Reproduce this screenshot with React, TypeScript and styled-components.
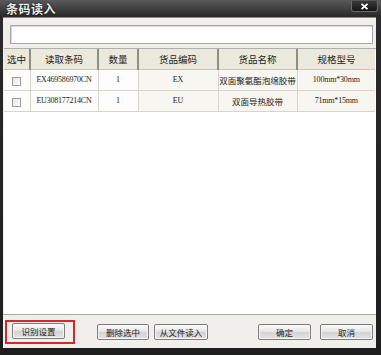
import React from 'react'
import styled, { createGlobalStyle } from 'styled-components'

const GlobalStyle = createGlobalStyle`
  html, body {
    margin: 0;
    padding: 0;
    background: #1a1a1a;
  }
  * {
    box-sizing: border-box;
  }
`

const Window = styled.div`
  width: 381px;
  height: 355px;
  display: flex;
  flex-direction: column;
  background: linear-gradient(#5a5a5a 0px, #2a2a2a 16px, #1e1e1e 100%);
  padding: 0 5px 7px 3px;
  font-family: 'Noto Sans CJK SC', 'Liberation Sans', sans-serif;
`

const TitleBar = styled.div`
  height: 17px;
  display: flex;
  align-items: center;
  justify-content: space-between;
  padding-left: 3px;
`

const Title = styled.span`
  color: #ececec;
  font-size: 12px;
  font-weight: 700;
  letter-spacing: 0.5px;
  line-height: 17px;
  text-shadow: 0 0 2px #000;
`

const CloseButton = styled.div`
  width: 27px;
  height: 11px;
  margin-top: -4px;
  margin-right: -2px;
  border: 1px solid #6a6a6a;
  border-top: none;
  border-radius: 0 0 3px 3px;
  background: linear-gradient(#3a3a3a, #151515);
  display: flex;
  align-items: center;
  justify-content: center;
`

const Body = styled.div`
  flex: 1;
  display: flex;
  flex-direction: column;
  background: #f0efeb;
  border-top: 1px solid #8a8a8a;
`

const SearchRow = styled.div`
  padding: 7px 3px 3px 7px;
`

const SearchInput = styled.div`
  height: 19px;
  background: #fff;
  border: 1px solid #a8a8a8;
  box-shadow: inset 1px 1px 0 #d8d8d8;
`

const TableArea = styled.div`
  flex: 1;
  background: #fff;
  border-top: 1px solid #b0b0b0;
  margin: 1px 0 0 1px;
`

const Grid = styled.table`
  border-collapse: collapse;
  table-layout: fixed;
  width: 371px;
`

const HeadCell = styled.th<{ w: number }>`
  width: ${({ w }) => w}px;
  height: 20px;
  padding: 0;
  background: #ebe9dc;
  border-right: 2px solid #8f8d84;
  border-bottom: 1px solid #c9c6b8;
  color: #222;
  font-size: 9.5px;
  font-weight: 400;
  text-align: center;
  &:last-child {
    border-right: none;
  }
`

const Cell = styled.td<{ tint?: boolean; serif?: boolean }>`
  height: 21px;
  padding: 0;
  background: ${({ tint }) => (tint ? '#f7f6f0' : '#fdfdfb')};
  border-right: 1px solid #d6d4cc;
  border-bottom: 1px solid #d6d4cc;
  color: #222;
  text-align: center;
  white-space: nowrap;
  overflow: hidden;
  font-size: ${({ serif }) => (serif ? '8px' : '8.5px')};
  letter-spacing: ${({ serif }) => (serif ? '-0.2px' : '0')};
  font-family: ${({ serif }) =>
    serif ? "'Liberation Serif', 'Noto Sans CJK SC', serif" : "'Noto Sans CJK SC', sans-serif"};
  &:last-child {
    border-right: none;
  }
`

const Check = styled.span`
  display: inline-block;
  width: 9px;
  height: 9px;
  border: 1px solid #9c9c9c;
  background: linear-gradient(135deg, #e4e4e4, #fff);
  vertical-align: middle;
`

const Footer = styled.div`
  height: 34px;
  display: flex;
  align-items: center;
  padding: 0 3px 0 9px;
  border-top: 1px solid #a9a9a9;
  background: #f0efeb;
`

const Highlight = styled.div`
  border: 2px solid #d8262c;
  padding: 1px 8px 3px 5px;
  margin-left: -7px;
`

const Button = styled.button<{ w: number; gapLeft?: number }>`
  display: block;
  width: ${({ w }) => w}px;
  height: 16px;
  margin-left: ${({ gapLeft }) => gapLeft ?? 0}px;
  padding: 0;
  border: 1px solid #7d7d7d;
  border-radius: 2px;
  background: linear-gradient(#fbfbfb, #e4e4e4 50%, #d4d4d4 51%, #e2e2e2);
  box-shadow: inset 0 0 0 1px #f6f6f6;
  font-family: 'Noto Sans CJK SC', sans-serif;
  font-size: 8.5px;
  color: #222;
  line-height: 14px;
`

const Spacer = styled.div`
  flex: 1;
`

const rows = [
  { code: 'EX469586970CN', qty: '1', sku: 'EX', name: '双面聚氨酯泡绵胶带', spec: '100mm*30mm' },
  { code: 'EU308177214CN', qty: '1', sku: 'EU', name: '双面导热胶带', spec: '71mm*15mm' },
]

const columns = [
  { label: '选中', w: 26 },
  { label: '读取条码', w: 68 },
  { label: '数量', w: 40 },
  { label: '货品编码', w: 80 },
  { label: '货品名称', w: 79 },
  { label: '规格型号', w: 78 },
]

export default function App() {
  return (
    <>
      <GlobalStyle />
      <Window>
        <TitleBar>
          <Title>条码读入</Title>
          <CloseButton>
            <svg width="9" height="7" viewBox="0 0 9 7">
              <path d="M1.5 0.8 L7.5 6.2 M7.5 0.8 L1.5 6.2" stroke="#fff" strokeWidth="1.8" />
            </svg>
          </CloseButton>
        </TitleBar>
        <Body>
          <SearchRow>
            <SearchInput />
          </SearchRow>
          <TableArea>
            <Grid>
              <thead>
                <tr>
                  {columns.map((c) => (
                    <HeadCell key={c.label} w={c.w}>
                      {c.label}
                    </HeadCell>
                  ))}
                </tr>
              </thead>
              <tbody>
                {rows.map((r) => (
                  <tr key={r.code}>
                    <Cell>
                      <Check />
                    </Cell>
                    <Cell serif>{r.code}</Cell>
                    <Cell serif>{r.qty}</Cell>
                    <Cell serif tint>
                      {r.sku}
                    </Cell>
                    <Cell tint>{r.name}</Cell>
                    <Cell serif tint>
                      {r.spec}
                    </Cell>
                  </tr>
                ))}
              </tbody>
            </Grid>
          </TableArea>
          <Footer>
            <Highlight>
              <Button w={53}>识别设置</Button>
            </Highlight>
            <Button w={52} gapLeft={22}>
              删除选中
            </Button>
            <Button w={54} gapLeft={5}>
              从文件读入
            </Button>
            <Spacer />
            <Button w={53}>确定</Button>
            <Button w={53} gapLeft={9}>
              取消
            </Button>
          </Footer>
        </Body>
      </Window>
    </>
  )
}
